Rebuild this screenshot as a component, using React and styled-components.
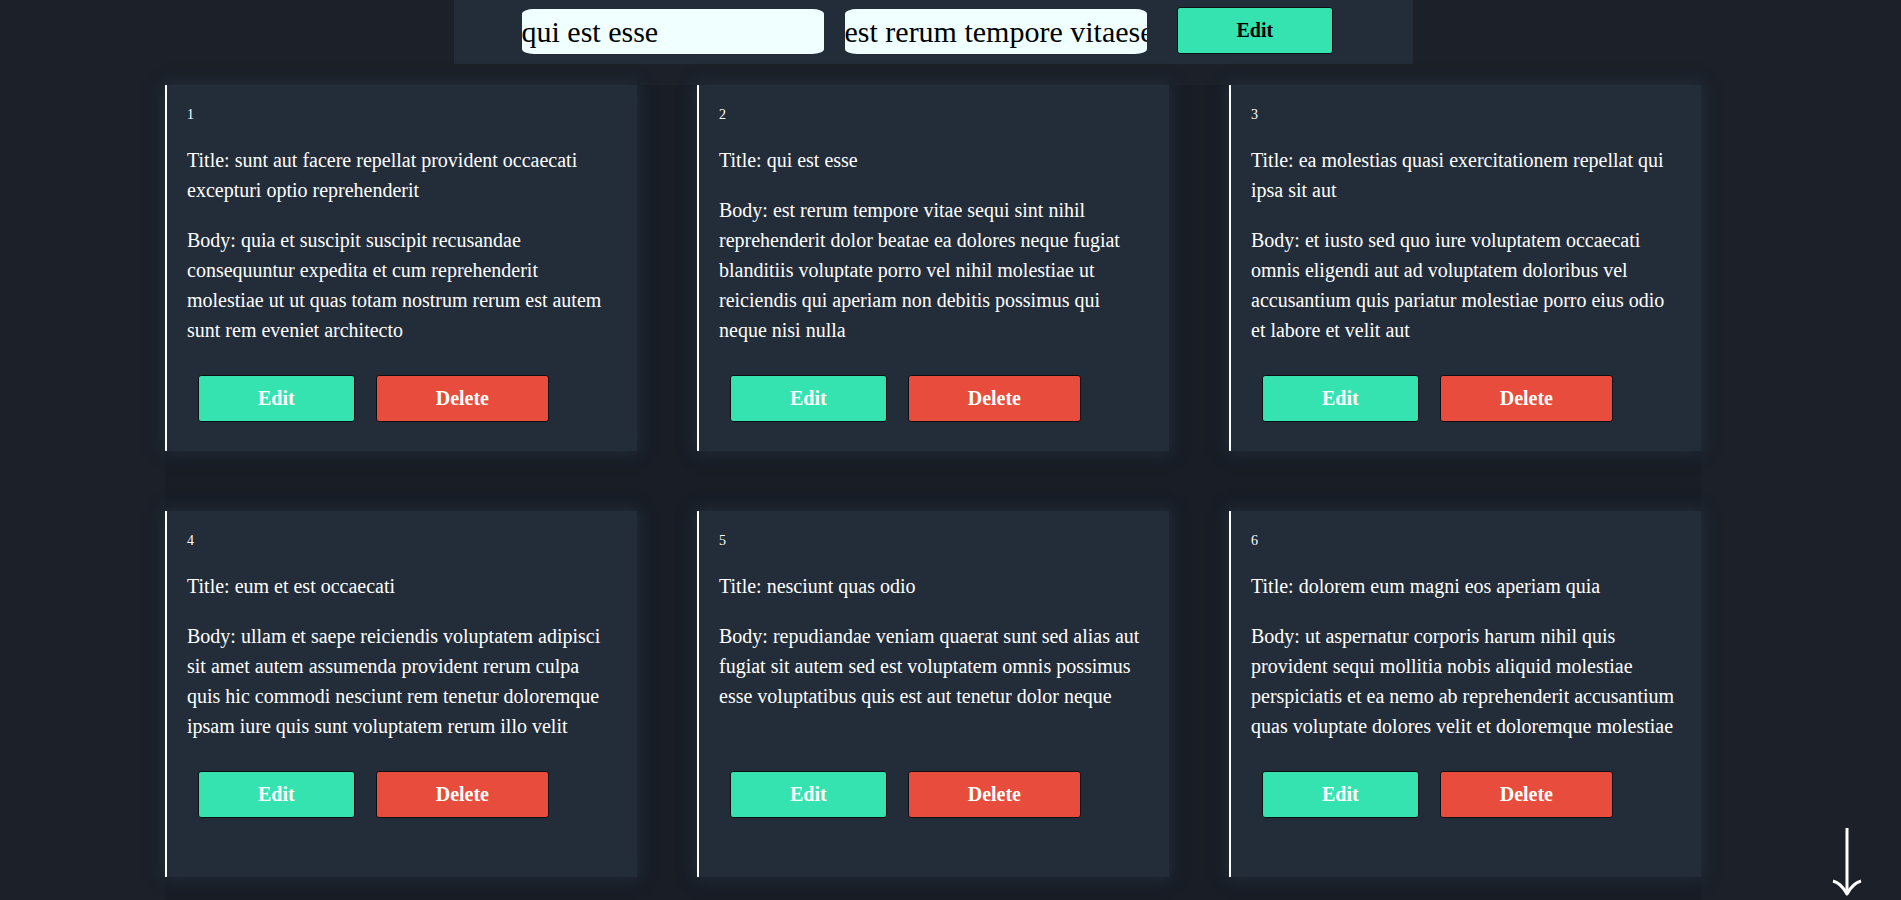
import React from "react";
import styled, { createGlobalStyle } from "styled-components";

const seed = [
  {
    title: "sunt aut facere repellat provident occaecati excepturi optio reprehenderit",
    body: "quia et suscipit\nsuscipit recusandae consequuntur expedita et cum\nreprehenderit molestiae ut ut quas totam\nnostrum rerum est autem sunt rem eveniet architecto",
  },
  {
    title: "qui est esse",
    body: "est rerum tempore vitae\nsequi sint nihil reprehenderit dolor beatae ea dolores neque\nfugiat blanditiis voluptate porro vel nihil molestiae ut reiciendis\nqui aperiam non debitis possimus qui neque nisi nulla",
  },
  {
    title: "ea molestias quasi exercitationem repellat qui ipsa sit aut",
    body: "et iusto sed quo iure\nvoluptatem occaecati omnis eligendi aut ad\nvoluptatem doloribus vel accusantium quis pariatur\nmolestiae porro eius odio et labore et velit aut",
  },
  {
    title: "eum et est occaecati",
    body: "ullam et saepe reiciendis voluptatem adipisci\nsit amet autem assumenda provident rerum culpa\nquis hic commodi nesciunt rem tenetur doloremque ipsam iure\nquis sunt voluptatem rerum illo velit",
  },
  {
    title: "nesciunt quas odio",
    body: "repudiandae veniam quaerat sunt sed\nalias aut fugiat sit autem sed est\nvoluptatem omnis possimus esse voluptatibus quis\nest aut tenetur dolor neque",
  },
  {
    title: "dolorem eum magni eos aperiam quia",
    body: "ut aspernatur corporis harum nihil quis provident sequi\nmollitia nobis aliquid molestiae\nperspiciatis et ea nemo ab reprehenderit accusantium quas\nvoluptate dolores velit et doloremque molestiae",
  },
  {
    title: "magnam facilis autem",
    body: "dolore placeat quibusdam ea quo vitae\nmagni quis enim qui quis quo nemo aut saepe\nquidem repellat excepturi ut quia\nsunt ut sequi eos ea sed quas",
  },
  {
    title: "dolorem dolore est ipsam",
    body: "dignissimos aperiam dolorem qui eum\nfacilis quibusdam animi sint suscipit qui sint possimus cum\nquaerat magni maiores excepturi\nipsam ut commodi dolor voluptatum modi aut vitae",
  },
  {
    title: "nesciunt iure omnis dolorem tempora et accusantium",
    body: "consectetur animi nesciunt iure dolore\nenim quia ad\nveniam autem ut quam aut nobis\net est aut quod aut provident voluptas autem voluptas",
  },
  {
    title: "optio molestias id quia eum",
    body: "quo et expedita modi cum officia vel magni\ndoloribus qui repudiandae\nvero nisi sit\nquos veniam quod sed accusamus veritatis error",
  },
];

// 100 posts like the api returns, only the first rows are on screen
const posts = Array.from({ length: 100 }, (_, i) => ({
  ...seed[i % seed.length],
  id: i + 1,
}));

const GlobalStyle = createGlobalStyle`
  html {
    color-scheme: dark;
  }
  body {
    margin: 0;
    background: #1b2029;
    font-family: "Liberation Serif", "Times New Roman", serif;
    color: #fff;
  }
`;

const Page = styled.div`
  padding-right: 35px;
`;

const TopBar = styled.form`
  width: 959px;
  height: 64px;
  margin: 0 auto;
  box-sizing: border-box;
  background: #222d39;
  display: flex;
  align-items: flex-end;
  padding: 0 0 10px 68px;
`;

const TextInput = styled.input`
  width: 302px;
  height: 45px;
  box-sizing: border-box;
  margin-right: ${(p) => p.$gap}px;
  padding: 0;
  border: none;
  border-radius: 12px / 5px;
  background: #f0ffff;
  color: #000;
  font-family: "Liberation Serif", "Times New Roman", serif;
  font-size: 30px;
  outline: none;
`;

const Button = styled.button`
  padding: 11px 59px;
  border: 1px solid #0d0f12;
  border-radius: 3px;
  background: ${(p) => (p.$danger ? "#e74c3c" : "#34e3b0")};
  color: ${(p) => (p.$dark ? "#000" : "#fff")};
  font-family: "Liberation Serif", "Times New Roman", serif;
  font-size: 20px;
  font-weight: bold;
  cursor: pointer;
`;

const Grid = styled.div`
  width: 1536px;
  margin: 21px auto 0;
  display: grid;
  grid-template-columns: repeat(3, 472px);
  justify-content: space-between;
  row-gap: 60px;
  background: #181d26;
`;

const Card = styled.div`
  height: 366px;
  box-sizing: border-box;
  padding: 19px 20px 0;
  background: #222d39;
  border-left: 2px solid #fff;
  box-shadow: 0 0 14px 2px rgba(36, 48, 60, 0.85);
`;

const PostId = styled.div`
  font-size: 14px;
  line-height: 21px;
  margin-bottom: 20px;
`;

const Text = styled.p`
  font-size: 20px;
  line-height: 30px;
  margin: 0 0 ${(p) => (p.$last ? 0 : 20)}px;
  min-height: ${(p) => (p.$last ? "120px" : "0")};
`;

const Actions = styled.div`
  display: flex;
  gap: 21px;
  margin-top: 30px;
  padding-left: 11px;
`;

const ScrollDown = styled.button`
  position: fixed;
  right: 39px;
  bottom: 4px;
  padding: 0;
  border: none;
  background: none;
  cursor: pointer;
  line-height: 0;
`;

function ArrowDown() {
  return (
    <svg width="30" height="68" viewBox="0 0 30 68">
      <line x1="15" y1="0" x2="15" y2="63" stroke="#fff" strokeWidth="3" />
      <path
        d="M1 53 Q9 55 15 66 Q21 55 29 53"
        fill="none"
        stroke="#fff"
        strokeWidth="3"
        strokeLinejoin="round"
      />
    </svg>
  );
}

function PostCard({ post }) {
  return (
    <Card>
      <PostId>{post.id}</PostId>
      <Text>Title: {post.title}</Text>
      <Text $last>Body: {post.body}</Text>
      <Actions>
        <Button>Edit</Button>
        <Button $danger>Delete</Button>
      </Actions>
    </Card>
  );
}

export default function App() {
  const editing = posts[1];

  return (
    <Page>
      <GlobalStyle />
      <TopBar onSubmit={(e) => e.preventDefault()}>
        <TextInput $gap={21} defaultValue={editing.title} />
        <TextInput $gap={30} defaultValue={editing.body.replace(/\n/g, "")} />
        <Button $dark type="submit">
          Edit
        </Button>
      </TopBar>
      <Grid>
        {posts.map((post) => (
          <PostCard key={post.id} post={post} />
        ))}
      </Grid>
      <ScrollDown aria-label="scroll down">
        <ArrowDown />
      </ScrollDown>
    </Page>
  );
}
